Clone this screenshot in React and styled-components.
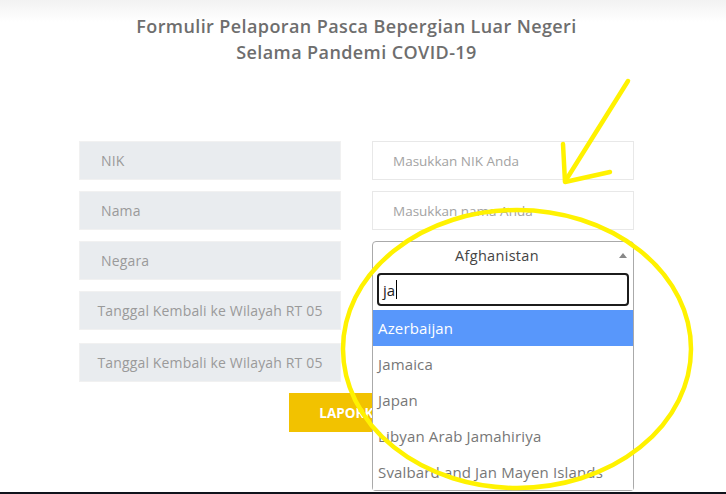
import React from 'react';
import styled, { createGlobalStyle } from 'styled-components';

const GlobalStyle = createGlobalStyle`
  html, body {
    margin: 0;
    padding: 0;
    background: #fff;
    font-family: "Open Sans", "Noto Sans", sans-serif;
  }
  * { box-sizing: border-box; }
`;

const Page = styled.div`
  position: relative;
  width: 726px;
  height: 494px;
  overflow: hidden;
  background: linear-gradient(to bottom, #f2f2f2 0px, #ffffff 22px);
`;

const Container = styled.div`
  width: 555px;
  margin: 0 0 0 79px;
  padding-top: 13px;
`;

const Title = styled.h2`
  margin: 0 0 76px;
  text-align: center;
  font-size: 18px;
  line-height: 26px;
  font-weight: 600;
  color: #6e6e6e;
  letter-spacing: 0.4px;
  white-space: nowrap;
`;

const FormGrid = styled.div`
  display: grid;
  grid-template-columns: 262px 262px;
  grid-template-rows: 39px 39px 39px 39px 39px;
  column-gap: 31px;
  row-gap: 11px;
`;

const Label = styled.div`
  height: 39px;
  display: flex;
  align-items: center;
  padding-left: 21px;
  background: #e9ecef;
  border: 1px solid #f1f1f1;
  color: #9a9a9a;
  font-size: 14px;
  letter-spacing: 0.15px;
  ${(p) => p.$center && 'justify-content: center; padding-left: 0;'}
  ${(p) => p.$last && 'margin-top: 2px;'}
`;

const Input = styled.div`
  height: 39px;
  display: flex;
  align-items: center;
  padding-left: 20px;
  border: 1px solid #e8e8e8;
  background: #fff;
  color: #a3a3a3;
  font-size: 13.5px;
`;

const SelectWrap = styled.div`
  position: relative;
  height: 39px;
`;

const SelectBox = styled.div`
  height: 28px;
  border: 1px solid #aaa;
  border-radius: 4px 4px 0 0;
  display: flex;
  align-items: center;
  justify-content: center;
  padding-right: 12px;
  color: #444;
  font-size: 14.5px;
  letter-spacing: 0.3px;
  position: relative;
`;

const Caret = styled.span`
  position: absolute;
  right: 6px;
  top: 11px;
  width: 0;
  height: 0;
  border-left: 4px solid transparent;
  border-right: 4px solid transparent;
  border-bottom: 5px solid #888;
`;

const Dropdown = styled.div`
  position: absolute;
  left: 0;
  top: 27px;
  width: 262px;
  background: #fff;
  border: 1px solid #aaa;
  border-top: none;
  border-radius: 0 0 4px 4px;
  z-index: 2;
`;

const SearchBox = styled.div`
  margin: 5px 4px 4px;
  height: 33px;
  border: 2px solid #1c1c1c;
  border-radius: 4px;
  display: flex;
  align-items: center;
  padding-left: 4px;
  font-size: 15px;
  color: #222;
`;

const Cursor = styled.span`
  display: inline-block;
  width: 1px;
  height: 19px;
  background: #000;
  margin-left: 1px;
`;

const Option = styled.div`
  height: 36px;
  display: flex;
  align-items: center;
  padding-left: 5px;
  font-size: 15px;
  letter-spacing: 0.15px;
  color: ${(p) => (p.$active ? '#fff' : '#777')};
  background: ${(p) => (p.$active ? '#5897fb' : '#fff')};
`;

const ButtonRow = styled.div`
  display: flex;
  justify-content: center;
  margin-top: 13px;
`;

const Button = styled.button`
  width: 135px;
  height: 39px;
  border: none;
  background: #f2c200;
  color: #fff;
  font-family: inherit;
  font-weight: 700;
  font-size: 13.5px;
`;

const Footer = styled.div`
  position: absolute;
  left: 0;
  right: 0;
  bottom: 0;
  height: 2px;
  background: #10141c;
`;

const Annotation = styled.svg`
  position: absolute;
  left: 0;
  top: 0;
  pointer-events: none;
  z-index: 5;
`;

const options = ['Azerbaijan', 'Jamaica', 'Japan', 'Libyan Arab Jamahiriya', 'Svalbard and Jan Mayen Islands'];

export default function App() {
  return (
    <Page>
      <GlobalStyle />
      <Container>
        <Title>
          Formulir Pelaporan Pasca Bepergian Luar Negeri
          <br />
          Selama Pandemi COVID-19
        </Title>
        <FormGrid>
          <Label>NIK</Label>
          <Input>Masukkan NIK Anda</Input>
          <Label>Nama</Label>
          <Input>Masukkan nama Anda</Input>
          <Label>Negara</Label>
          <SelectWrap>
            <SelectBox>
              Afghanistan
              <Caret />
            </SelectBox>
            <Dropdown>
              <SearchBox>
                ja
                <Cursor />
              </SearchBox>
              {options.map((o, i) => (
                <Option key={o} $active={i === 0}>{o}</Option>
              ))}
            </Dropdown>
          </SelectWrap>
          <Label $center>Tanggal Kembali ke Wilayah RT 05</Label>
          <Input />
          <Label $center $last>Tanggal Kembali ke Wilayah RT 05</Label>
          <Input />
        </FormGrid>
        <ButtonRow>
          <Button>LAPORKAN</Button>
        </ButtonRow>
      </Container>
      <Footer />
      <Annotation width="726" height="494" viewBox="0 0 726 494">
        <g fill="none" stroke="#fff200" strokeWidth="4.5" strokeLinecap="round" strokeLinejoin="round">
          <path d="M628 81 L566 180" />
          <path d="M563 144 L565 182 L610 172" />
          <ellipse cx="517" cy="349" rx="174" ry="139" />
        </g>
      </Annotation>
    </Page>
  );
}
